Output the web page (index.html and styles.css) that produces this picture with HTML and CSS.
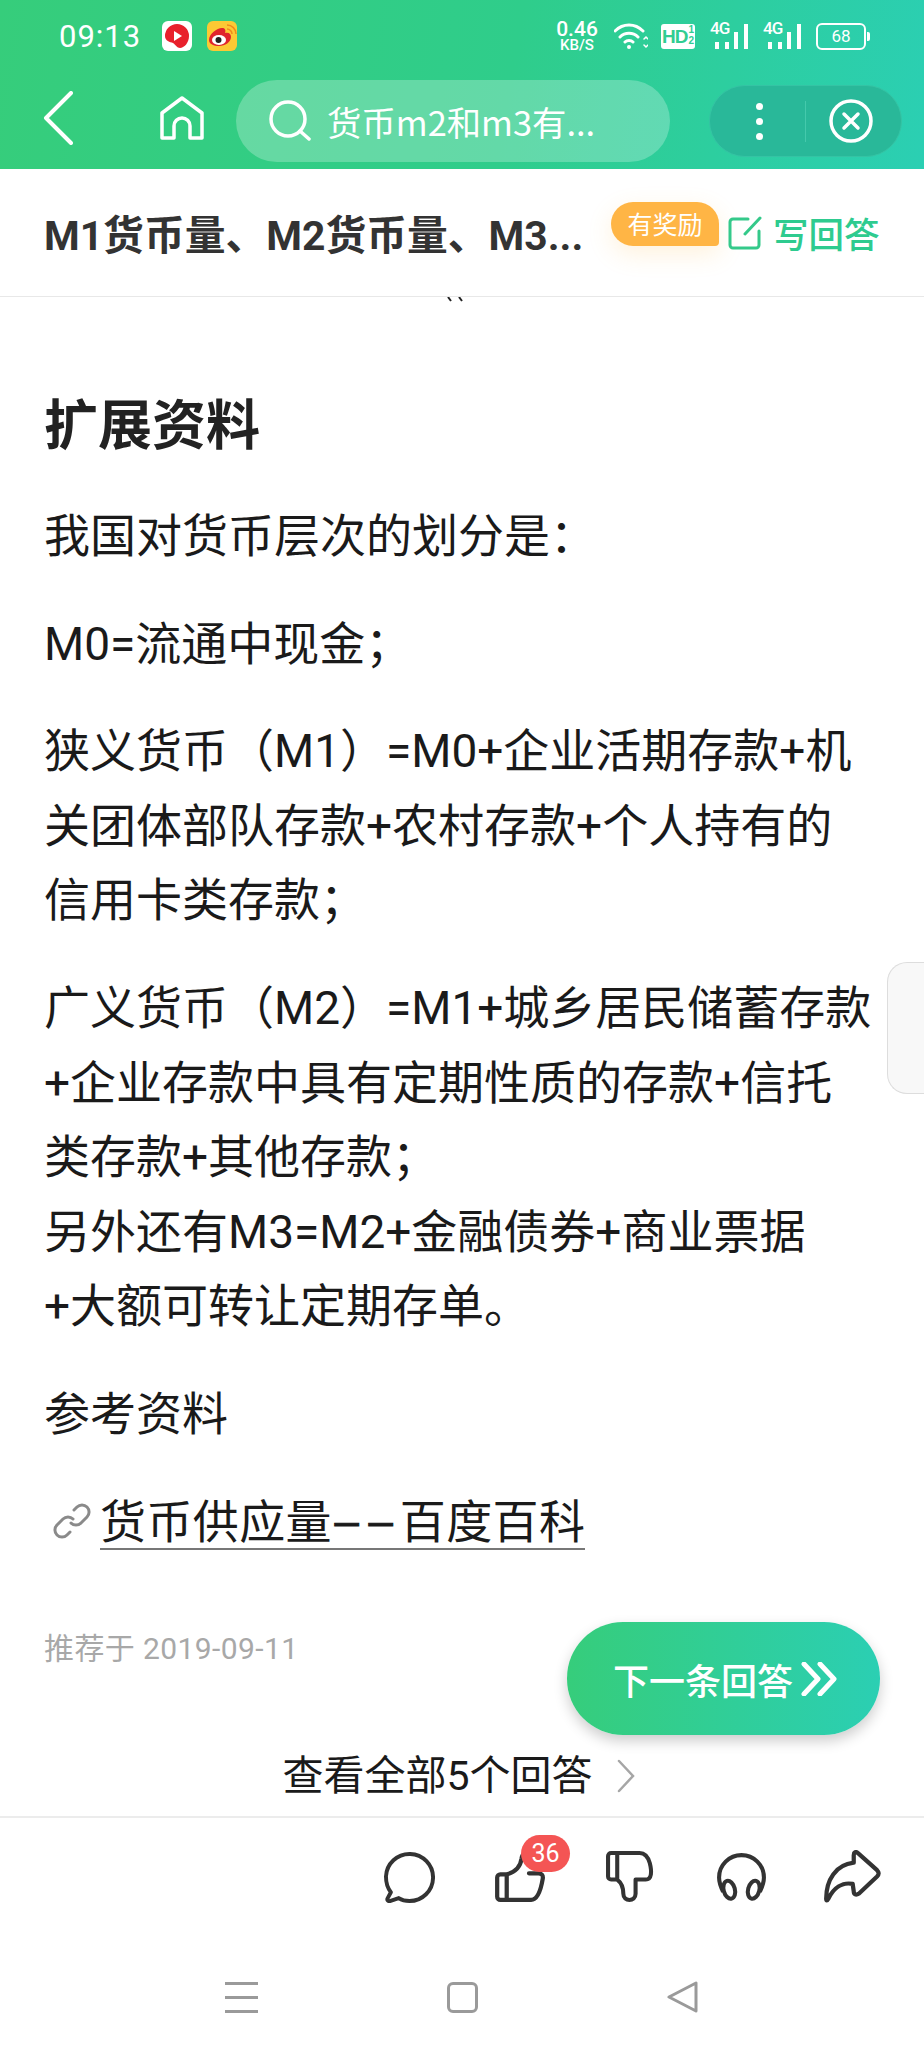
FILE: index.html
```html
<!DOCTYPE html>
<html lang="zh-CN">
<head>
    <meta charset="UTF-8">
    <title>货币m2和m3有什么区别</title>
    <link rel="stylesheet" href="styles.css">
</head>
<body>
<div class="page">

    <header class="top">
        <div class="status">
            <span class="time">09:13</span>
            <svg class="app-icon" viewBox="0 0 30 30"><rect width="30" height="30" rx="6" fill="#fff"/><path d="M15 3a12 12 0 0 1 12 12c0 7-5 12-9 12-3 0-4-3-7-5-3-1-8-2-8-7A12 12 0 0 1 15 3z" fill="#e8202c"/><path d="M12 10l8 5-8 5z" fill="#fff"/></svg>
            <svg class="app-icon" viewBox="0 0 30 30"><rect width="30" height="30" rx="6" fill="#fcc934"/><path d="M2 19c0-6 8-12 13-12 3 0 4 2 3 5 4-1 6 1 6 4 0 5-6 9-12 9-5 0-10-2-10-6z" fill="#e0242c"/><ellipse cx="12" cy="19" rx="7" ry="5" fill="#fff"/><circle cx="11.500" cy="19" r="3" fill="#222"/><path d="M20 8a5 5 0 0 1 5 5M20 4a9 9 0 0 1 9 9" fill="none" stroke="#f08a1c" stroke-width="1.500"/></svg>
            <div class="status-right">
                <div class="speed"><b>0.46</b><small>KB/S</small></div>
                <svg class="wifi" viewBox="0 0 34 28" fill="none" stroke="#fff" stroke-width="3" stroke-linecap="round"><path d="M1 9c8-8 20-8 28 0M6 15c5-5 13-5 18 0M11 20c2-2 6-2 8 0"/><circle cx="15" cy="25" r="2" fill="#fff" stroke="none"/><path d="M30 17l2-2 2 2M30 23l2 2 2-2" stroke-width="1.500"/></svg>
                <span class="hd">HD<i>1<br>2</i></span>
                <div class="signal"><em>4G</em><span class="b1"></span><span class="b2"></span><span class="b3"></span><span class="b4"></span></div>
                <div class="signal"><em>4G</em><span class="b1"></span><span class="b2"></span><span class="b3"></span><span class="b4"></span></div>
                <div class="battery"><span>68</span></div>
            </div>
        </div>
        <div class="toolbar">
            <svg class="back" viewBox="0 0 30 54" fill="none" stroke="#fff" stroke-width="4" stroke-linecap="round" stroke-linejoin="round"><path d="M28 2L3 27l25 25"/></svg>
            <svg class="home" viewBox="0 0 44 44" fill="none" stroke="#fff" stroke-width="3.500" stroke-linejoin="round"><path d="M2 42V17L22 2l20 15v25H30V30a8 8 0 0 0-16 0v12z"/></svg>
            <div class="search">
                <svg viewBox="0 0 42 42" fill="none" stroke="#fff" stroke-width="3.500" stroke-linecap="round"><circle cx="19" cy="19" r="17"/><path d="M31 31l9 8"/></svg>
                <span>货币m2和m3有...</span>
            </div>
            <div class="capsule">
                <div class="dots"><i></i><i></i><i></i></div>
                <div class="capsule-line"></div>
                <svg viewBox="0 0 44 44" fill="none" stroke="#fff" stroke-width="3.500" stroke-linecap="round"><circle cx="22" cy="22" r="20"/><path d="M15 15l14 14M29 15L15 29"/></svg>
            </div>
        </div>
    </header>

    <div class="titlebar">
        <h2>M1货币量、M2货币量、M3...</h2>
        <span class="reward">有奖励</span>
        <svg class="write-icon" viewBox="0 0 34 34" fill="none" stroke="#34c98a" stroke-width="3" stroke-linecap="round"><path d="M20 3H5a3 3 0 0 0-3 3v23a3 3 0 0 0 3 3h23a3 3 0 0 0 3-3V15"/><path d="M32 2L17 18"/></svg>
        <span class="write">写回答</span>
    </div>

    <main class="article">
        <svg class="clip-mark" viewBox="0 0 20 5" fill="none" stroke="#222" stroke-width="2"><path d="M1 0l3 4M12 0l3 4"/></svg>
        <h3>扩展资料</h3>
        <p>我国对货币层次的划分是：</p>
        <p>M0=流通中现金；</p>
        <p>狭义货币（M1）=M0+企业活期存款+机<br>关团体部队存款+农村存款+个人持有的<br>信用卡类存款；</p>
        <p>广义货币（M2）=M1+城乡居民储蓄存款<br>+企业存款中具有定期性质的存款+信托<br>类存款+其他存款；<br>另外还有M3=M2+金融债券+商业票据<br>+大额可转让定期存单。</p>
        <p>参考资料</p>
        <p class="ref">
            <svg viewBox="0 0 38 36" fill="none" stroke="#8a8a8a" stroke-width="3" stroke-linecap="round"><path d="M21 7l3-3a7 7 0 0 1 10 10l-6 6a7 7 0 0 1-10 0"/><path d="M17 29l-3 3A7 7 0 0 1 4 22l6-6a7 7 0 0 1 10 0"/></svg>
            <a>货币供应量<span class="dash">——</span>百度百科</a>
        </p>
        <div class="date">推荐于 2019-09-11</div>
        <div class="all">查看全部5个回答
            <svg viewBox="0 0 18 34" fill="none" stroke="#a6a6a6" stroke-width="2.500" stroke-linecap="round"><path d="M2 2l14 15L2 32"/></svg>
        </div>
        <div class="side-tab"></div>
        <div class="next">下一条回答
            <svg viewBox="0 0 36 34" fill="none" stroke="#fff" stroke-width="5" stroke-linecap="round" stroke-linejoin="round"><path d="M3 2l14 15L3 32M19 2l14 15-14 15"/></svg>
        </div>
    </main>

    <div class="actions">
        <div class="action">
            <svg viewBox="0 0 52 54" fill="none" stroke="#333" stroke-width="4" stroke-linejoin="round"><path d="M7 43C3 38 2 32 2 27a24 24 0 1 1 24 25c-4 0-8-1-11-3l-9 3c-2 .500-3-1-2.500-2.500z"/></svg>
        </div>
        <div class="action">
            <svg viewBox="0 0 50 50" fill="none" stroke="#333" stroke-width="4" stroke-linejoin="round" stroke-linecap="round"><path d="M12 23H6a3 3 0 0 0-3 3v18a3 3 0 0 0 3 3h6zM12 23c7-2 13-7 14-15 .500-5 5-6 8-3M12 47h23c6 0 9-8 11-20 .500-3-1-5-4-5h-9"/></svg>
            <span class="badge">36</span>
        </div>
        <div class="action">
            <svg viewBox="0 0 50 52" fill="none" stroke="#333" stroke-width="4" stroke-linejoin="round" stroke-linecap="round"><path d="M12 3H6a3 3 0 0 0-3 3v20a3 3 0 0 0 3 3h6zM12 3h22c5 0 8 3 10 10 2 8 2 16-4 16H30v14c0 8-12 8-12 0 0-7-2-11-6-14"/></svg>
        </div>
        <div class="action">
            <svg viewBox="-2 -3 52 52" fill="none" stroke="#333" stroke-width="4"><path d="M6 38C3 32 2 28 2 24a22 22 0 0 1 44 0c0 4-1 8-4 14"/><ellipse cx="12" cy="36" rx="5.500" ry="9" transform="rotate(-15 12 36)"/><ellipse cx="36" cy="36" rx="5.500" ry="9" transform="rotate(15 36 36)"/></svg>
        </div>
        <div class="action">
            <svg viewBox="0 0 55 50" fill="none" stroke="#333" stroke-width="4" stroke-linejoin="round"><path d="M3 46C3 28 12 14 29 12V5c0-3 2-4 4-2l18 16c2 2 2 4 0 6L34 41c-3 2-5 1-5-2l-1-7C18 30 10 36 5 46c-1 2-2 2-2 0z"/></svg>
        </div>
    </div>

    <nav class="navbar">
        <div class="menu-icon"><i></i><i></i><i></i></div>
        <div class="square-icon"></div>
        <svg viewBox="0 0 32 32" fill="none" stroke="#9a9a9a" stroke-width="3" stroke-linejoin="round"><path d="M2 16L29 2v28z"/></svg>
    </nav>

</div>
</body>
</html>
```

FILE: styles.css
```css
html, body {
    margin: 0;
    padding: 0;
    overflow: hidden;
}
body {
    font-family: "Noto Sans CJK SC", Roboto, sans-serif;
    background-color: white;
    color: #1a1a1a;
}
.page {
    width: 924px;
    height: 2053px;
    display: flex;
    flex-direction: column;
}

/* green header */
.top {
    height: 169px;
    flex: none;
    background: linear-gradient(100deg, #36cd7b 0%, #2fcd8b 55%, #2bcfb3 100%);
    color: white;
}
.status {
    height: 72px;
    display: flex;
    align-items: center;
    padding: 0 58px 0 59px;
}
.time {
    font-family: Roboto, sans-serif;
    font-size: 31px;
    letter-spacing: 1px;
    width: 103px;
}
.app-icon {
    width: 30px;
    height: 30px;
    margin-right: 15px;
}
.status-right {
    margin-left: auto;
    display: flex;
    align-items: center;
}
.speed {
    width: 44px;
    display: flex;
    flex-direction: column;
    align-items: center;
    font-family: Roboto, sans-serif;
}
.speed b {
    font-size: 21px;
    line-height: 18px;
    font-weight: 500;
}
.speed small {
    font-size: 15px;
    line-height: 14px;
    font-weight: 500;
}
.wifi {
    width: 34px;
    height: 28px;
    margin-left: 15px;
}
.hd {
    width: 34px;
    height: 25px;
    margin-left: 13px;
    background: white;
    color: #30cd92;
    border-radius: 3px;
    font: 700 19px/25px "Liberation Sans", sans-serif;
    display: flex;
    letter-spacing: -1px;
    padding-left: 1px;
    box-sizing: border-box;
    overflow: hidden;
}
.hd i {
    font-size: 10px;
    line-height: 11px;
    font-style: normal;
    margin-left: 1px;
}
.signal {
    position: relative;
    width: 38px;
    height: 26px;
    margin-left: 15px;
    padding-left: 5px;
    box-sizing: border-box;
    display: flex;
    align-items: flex-end;
    gap: 5.700px;
}
.signal em {
    position: absolute;
    left: 0;
    top: -2px;
    font: 500 17px/15px Roboto, sans-serif;
    letter-spacing: -1px;
}
.signal span {
    width: 4px;
    background: white;
}
.b1, .b2 {
    height: 7px;
}
.b3 {
    height: 17px;
}
.b4 {
    height: 25px;
}
.battery {
    position: relative;
    width: 46px;
    height: 23px;
    margin-left: 15px;
    border: 2px solid white;
    border-radius: 6px;
    font: 400 17px/23px Roboto, sans-serif;
    text-align: center;
}
.battery:after {
    content: "";
    position: absolute;
    right: -6px;
    top: 7px;
    width: 3px;
    height: 9px;
    background: white;
    border-radius: 0 2px 2px 0;
}
.toolbar {
    height: 97px;
    display: flex;
    align-items: center;
    position: relative;
}
.back {
    width: 30px;
    height: 54px;
    margin-left: 43px;
    margin-top: -6px;
}
.home {
    width: 44px;
    height: 44px;
    margin-left: 87px;
    margin-top: -6px;
}
.search {
    width: 434px;
    height: 82px;
    margin-left: 32px;
    margin-top: 1px;
    border-radius: 41px;
    background: rgba(255, 255, 255, 0.25);
    display: flex;
    align-items: center;
    padding-left: 33px;
    box-sizing: border-box;
    font-size: 34.400px;
}
.search svg {
    width: 42px;
    height: 42px;
    margin-right: 16px;
}
.capsule {
    width: 193px;
    height: 72px;
    margin-left: 39px;
    margin-top: 1px;
    border-radius: 36px;
    background: #29b899;
    border: 1px solid #35c3a4;
    box-sizing: border-box;
    display: flex;
    align-items: center;
}
.dots {
    width: 95px;
    display: flex;
    flex-direction: column;
    align-items: center;
    gap: 8px;
    padding-left: 4px;
    box-sizing: border-box;
}
.dots i {
    width: 7px;
    height: 7px;
    border-radius: 50%;
    background: white;
}
.capsule-line {
    width: 1px;
    height: 41px;
    background: #45c9ac;
}
.capsule svg {
    width: 44px;
    height: 44px;
    margin-left: 23px;
}

/* question title */
.titlebar {
    height: 128px;
    flex: none;
    box-sizing: border-box;
    border-bottom: 1px solid #e8e8e8;
    display: flex;
    align-items: center;
    padding-left: 44px;
    position: relative;
}
.titlebar h2 {
    margin: 0;
    width: 567px;
    font-family: Roboto, "Noto Sans CJK SC", sans-serif;
    font-size: 40.800px;
    font-weight: 700;
    color: #333;
    white-space: nowrap;
}
.reward {
    width: 108px;
    height: 44px;
    margin-top: -17px;
    background: #ffb545;
    color: white;
    border-radius: 22px 22px 4px 22px;
    box-shadow: 0 8px 24px rgba(255, 181, 69, 0.18);
    font-size: 25px;
    line-height: 43px;
    text-align: center;
}
.write-icon {
    width: 34px;
    height: 34px;
    margin-left: 9px;
}
.write {
    margin-left: 11px;
    font-size: 35.500px;
    font-weight: 500;
    color: #2ecb8f;
}

/* answer */
.article {
    flex: 1;
    position: relative;
    overflow: hidden;
    padding: 98px 0 0 44px;
    font-family: Roboto, "Noto Sans CJK SC", sans-serif;
}
.clip-mark {
    position: absolute;
    left: 447px;
    top: 0;
    width: 20px;
    height: 5px;
}
h3 {
    margin: 0 0 40px;
    font-size: 54px;
    line-height: 64px;
    font-weight: 700;
    color: #222;
}
p {
    margin: 0 0 33px;
    font-size: 46px;
    line-height: 74.600px;
    white-space: nowrap;
}
.ref {
    display: flex;
    align-items: center;
    height: 74px;
    margin-left: 9px;
    margin-top: -1px;
}
.ref svg {
    width: 38px;
    height: 36px;
    margin-right: 9px;
}
.ref a {
    border-bottom: 2px solid #777;
    font-size: 46px;
    letter-spacing: 0.400px;
    line-height: 66px;
    height: 59px;
    margin-top: -3px;
}
.dash {
    font-size: 37px;
    letter-spacing: 5px;
    -webkit-text-stroke: 1px #1a1a1a;
}
.date {
    margin-top: 71px;
    font-size: 30px;
    letter-spacing: 0.400px;
    line-height: 40px;
    color: #a8a8a8;
}
.all {
    display: flex;
    align-items: center;
    justify-content: center;
    margin-top: 77px;
    padding-right: 51px;
    font-size: 41px;
    line-height: 60px;
}
.all svg {
    width: 18px;
    height: 34px;
    margin-left: 24px;
}
.side-tab {
    position: absolute;
    right: 0;
    top: 665px;
    width: 36px;
    height: 130px;
    background: #f8f8f8;
    border: 1px solid #ddd;
    border-right: none;
    border-radius: 20px 0 0 20px;
}
.next {
    position: absolute;
    left: 567px;
    top: 1325px;
    width: 313px;
    height: 113px;
    border-radius: 56px;
    background: linear-gradient(90deg, #36cd7b, #2bcfb3);
    box-shadow: 0 6px 14px rgba(0, 0, 0, 0.2);
    color: white;
    font-size: 36px;
    font-weight: 500;
    display: flex;
    align-items: center;
    padding-left: 46px;
    box-sizing: border-box;
}
.next svg {
    width: 36px;
    height: 34px;
    margin-left: 8px;
}

/* bottom actions */
.actions {
    height: 118px;
    flex: none;
    border-top: 2px solid #ececec;
    box-sizing: border-box;
    display: flex;
    justify-content: flex-end;
    align-items: center;
    padding-right: 17px;
}
.action {
    width: 110.500px;
    display: flex;
    justify-content: center;
    position: relative;
}
.action svg {
    display: block;
    width: auto;
    height: 53px;
}
.badge {
    position: absolute;
    left: 56px;
    top: -15px;
    width: 49px;
    height: 37px;
    border-radius: 19px;
    background: #f45554;
    color: white;
    font: 400 25px/37px Roboto, sans-serif;
    text-align: center;
}

/* android nav */
.navbar {
    height: 119px;
    flex: none;
    box-sizing: border-box;
    display: flex;
    align-items: center;
    padding: 7px 0 0 225px;
}
.menu-icon {
    width: 33px;
    display: flex;
    flex-direction: column;
    gap: 11px;
}
.menu-icon i {
    height: 3px;
    background: #9a9a9a;
}
.square-icon {
    width: 31px;
    height: 31px;
    margin-left: 189px;
    box-sizing: border-box;
    border: 3px solid #9a9a9a;
    border-radius: 6px;
}
.navbar svg {
    width: 32px;
    height: 32px;
    margin-left: 189px;
}
```
